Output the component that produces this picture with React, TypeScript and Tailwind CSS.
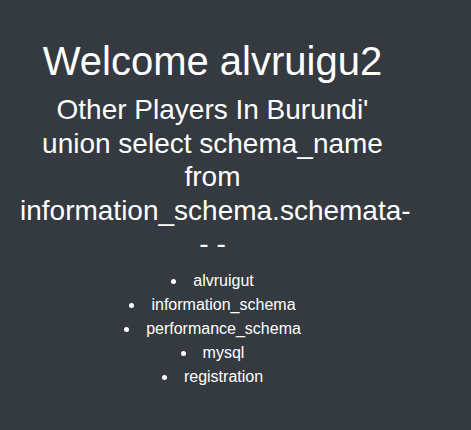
import React from 'react';

const schemas = ['alvruigut', 'information_schema', 'performance_schema', 'mysql', 'registration'];

export default function App() {
  return (
    <div className="min-h-screen bg-[#343a40] text-white font-['Liberation_Sans',Arial,sans-serif] pt-[37px]">
      <div className="ml-[20px] w-[385px] text-center">
        <h1 className="text-[40px] leading-[1.2] mb-2">Welcome alvruigu2</h1>
        <h2 className="text-[28px] leading-[1.2] mb-2">
          Other Players In Burundi' union select schema_name from information_schema.schemata-- -
        </h2>
        <ul className="list-disc list-inside text-base leading-6">
          {schemas.map((s) => (
            <li key={s}>{s}</li>
          ))}
        </ul>
      </div>
    </div>
  );
}
